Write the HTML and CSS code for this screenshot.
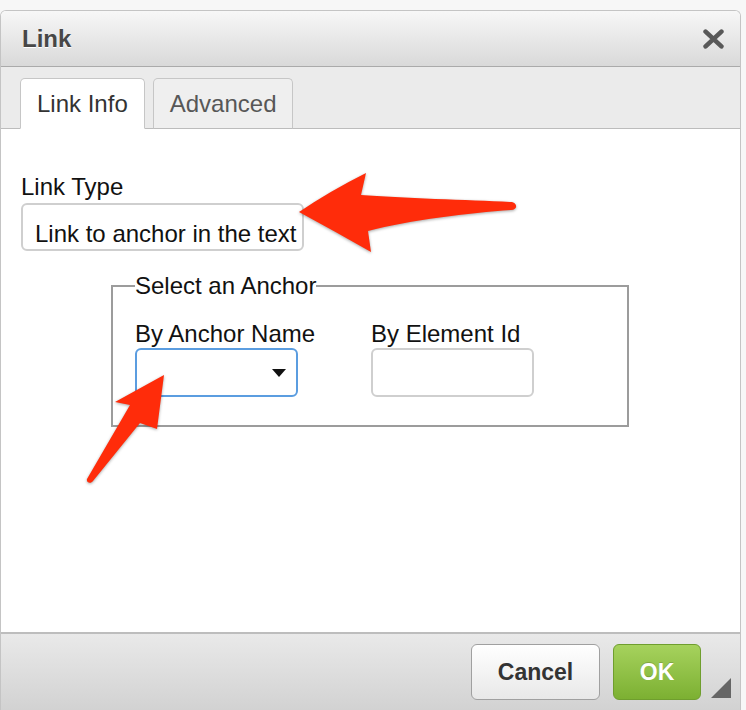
FILE: index.html
```html
<!DOCTYPE html>
<html>
<head>
<meta charset="utf-8">
<title>Link</title>
<link rel="stylesheet" href="styles.css">
</head>
<body>
<div class="page">
  <div class="dialog">
    <div class="titlebar">
      <span class="title">Link</span>
      <span class="close">
        <svg width="21" height="20" viewBox="0 0 21 20"><path d="M2.6 2.6 L18.4 17.4 M18.4 2.6 L2.6 17.4" stroke="#585858" stroke-width="4.6" stroke-linecap="round" fill="none"/></svg>
      </span>
    </div>
    <div class="tabs">
      <div class="tab active">Link Info</div>
      <div class="tab">Advanced</div>
    </div>
    <div class="content">
      <div class="label">Link Type</div>
      <div class="field linktype">Link to anchor in the text</div>
      <fieldset class="anchor-set">
        <legend>Select an Anchor</legend>
        <div class="cols">
          <div class="col">
            <div class="label">By Anchor Name</div>
            <div class="field select"><span class="caret"></span></div>
          </div>
          <div class="col">
            <div class="label">By Element Id</div>
            <div class="field input"></div>
          </div>
        </div>
      </fieldset>
    </div>
    <div class="footer">
      <button class="btn cancel">Cancel</button>
      <button class="btn ok">OK</button>
      <span class="resize"></span>
    </div>
  </div>
  <svg class="arrows" width="746" height="710" viewBox="0 0 746 710">
    <path d="M299 212 Q330 191 366 173 L361 195 C400 198 470 200 510 202 C518 202 518 210 511 210 C470 213 410 220 368 231 L371 252 Q336 232 299 212 Z" fill="#ff2c0a"/>
    <path d="M164 375 L157 429 L140 423 L93 481 C91 484 86 483 87 479 L130 405 L115 402 Z" fill="#ff2c0a"/>
  </svg>
</div>
</body>
</html>
```
FILE: styles.css
```css
html, body {
  margin: 0;
  padding: 0;
}
body {
  background: #f7f7f7;
  font-family: "Liberation Sans", Arial, sans-serif;
  overflow: hidden;
  width: 746px;
  height: 710px;
}
.page {
  position: relative;
  width: 746px;
  height: 710px;
  overflow: hidden;
}
.dialog {
  margin-top: 10px;
  width: 741px;
  box-sizing: border-box;
  border: 1px solid #c4c4c4;
  border-bottom: none;
  border-radius: 6px 6px 0 0;
  background: #fff;
  display: flex;
  flex-direction: column;
  overflow: hidden;
}
.titlebar {
  height: 55px;
  border-bottom: 1px solid #aaaaaa;
  background: linear-gradient(#f7f7f7, #d9d9d9);
  display: flex;
  align-items: center;
  justify-content: space-between;
  padding: 0 16px 0 21px;
}
.title {
  font-weight: bold;
  font-size: 24px;
  line-height: 28px;
  color: #474747;
  text-shadow: 0 1px 0 #fff;
}
.close {
  display: flex;
  width: 21px;
  height: 20px;
}
.tabs {
  background: #ebebeb;
  border-bottom: 1px solid #bcbcbc;
  display: flex;
  align-items: flex-end;
  gap: 8px;
  padding: 11px 0 0 19px;
}
.tab {
  box-sizing: border-box;
  height: 51px;
  margin-bottom: -1px;
  padding: 0 16px;
  border: 1px solid #c6c6c6;
  border-bottom-color: #bcbcbc;
  border-radius: 5px 5px 0 0;
  background: #efefef;
  color: #575757;
  font-size: 24px;
  line-height: 28px;
  display: flex;
  align-items: center;
}
.tab.active {
  background: #fff;
  color: #333;
  border-bottom-color: #fff;
}
.content {
  height: 503px;
  box-sizing: border-box;
  padding: 44px 0 0 20px;
  background: #fff;
  overflow: hidden;
}
.label {
  font-size: 24px;
  line-height: 28px;
  color: #111;
}
.content > .label {
  margin-bottom: 2px;
}
.field {
  box-sizing: border-box;
  border: 2px solid #cfcfcf;
  border-radius: 6px;
  background: #fff;
}
.linktype {
  width: 283px;
  height: 48px;
  padding: 15px 0 0 12px;
  font-size: 24px;
  line-height: 28px;
  color: #111;
  white-space: nowrap;
}
.anchor-set {
  margin: 21px 0 0 90px;
  width: 518px;
  box-sizing: border-box;
  border: 2px solid #9c9c9c;
  padding: 20px 0 28px 22px;
  min-width: 0;
}
.anchor-set legend {
  padding: 0;
  font-size: 24px;
  line-height: 28px;
  color: #111;
}
.cols {
  display: grid;
  grid-template-columns: 236px auto;
}
.select, .input {
  width: 163px;
  height: 49px;
}
.select {
  border-color: #5b9de0;
  display: flex;
  align-items: center;
  justify-content: flex-end;
  padding-right: 10px;
}
.caret {
  width: 0;
  height: 0;
  border-left: 7px solid transparent;
  border-right: 7px solid transparent;
  border-top: 8px solid #111;
  margin-top: 1px;
}
.footer {
  position: relative;
  border-top: 2px solid #bdbdbd;
  height: 100px;
  background: linear-gradient(#e9e9e9, #d2d2d2 76px);
  display: flex;
  justify-content: flex-end;
  align-items: flex-start;
  gap: 13px;
  padding: 10px 39px 0 0;
}
.btn {
  height: 56px;
  box-sizing: border-box;
  border-radius: 6px;
  font-family: "Liberation Sans", Arial, sans-serif;
  font-weight: bold;
  font-size: 23px;
  padding: 0;
  margin: 0;
}
.cancel {
  width: 129px;
  border: 1px solid #a0a0a0;
  background: linear-gradient(#ffffff, #e8e8e8);
  color: #333;
}
.ok {
  width: 88px;
  border: 1px solid #6f9e2e;
  background: linear-gradient(#a6d25d, #7cb032);
  color: #fff;
  text-shadow: 0 -1px 0 rgba(0, 0, 0, 0.18);
}
.resize {
  position: absolute;
  right: 9px;
  top: 44px;
  width: 0;
  height: 0;
  border-left: 20px solid transparent;
  border-bottom: 20px solid #666;
}
.arrows {
  position: absolute;
  left: 0;
  top: 0;
  pointer-events: none;
  filter: drop-shadow(0 1px 1.5px rgba(0, 0, 0, 0.35));
}
```
